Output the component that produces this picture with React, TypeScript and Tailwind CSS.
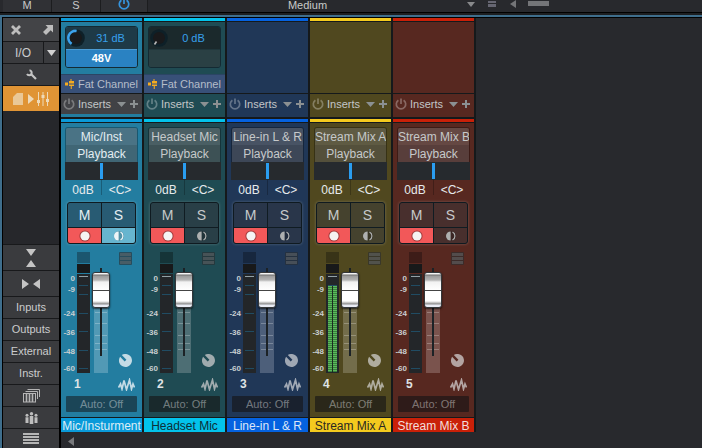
import React from "react";

type Channel = {
  id: number;
  label: string;
  name: string;
  body: string;
  strip: string;
  plateTop: string;
  plateBottom: string;
  button: string;
  auto: string;
  nameText: string;
  track: string;
  clip: string;
  soft: string;
  inserts: string;
  selected?: boolean;
  preamp?: { gain: string; phantom: boolean; arc: boolean };
  level?: boolean;
};

const channels: Channel[] = [
  {
    id: 1,
    label: "Mic/Inst",
    name: "Mic/Insturment",
    body: "bg-[#237da0]",
    strip: "bg-[#0a9ad9]",
    plateTop: "bg-[#4a7385]",
    plateBottom: "bg-[#406675]",
    button: "bg-[#285b73]",
    auto: "bg-[#1b4557]",
    nameText: "text-[#dceef7]",
    track: "#5299b5",
    clip: "#1b566f",
    soft: "text-[#c3dbe5]",
    inserts: "bg-[#414246]",
    selected: true,
    preamp: { gain: "31 dB", phantom: true, arc: true },
  },
  {
    id: 2,
    label: "Headset Mic",
    name: "Headset Mic",
    body: "bg-[#1f4b53]",
    strip: "bg-[#03c3eb]",
    plateTop: "bg-[#4a5f64]",
    plateBottom: "bg-[#3d5155]",
    button: "bg-[#293f47]",
    auto: "bg-[#19292c]",
    nameText: "text-[#0d2f38]",
    track: "#4d6e74",
    clip: "#153438",
    soft: "text-[#a0abae]",
    inserts: "bg-[#1f4b53]",
    preamp: { gain: "0 dB", phantom: false, arc: false },
  },
  {
    id: 3,
    label: "Line-in L & R",
    name: "Line-in L & R",
    body: "bg-[#203757]",
    strip: "bg-[#0562e0]",
    plateTop: "bg-[#485364]",
    plateBottom: "bg-[#3d4757]",
    button: "bg-[#29364a]",
    auto: "bg-[#19212e]",
    nameText: "text-[#dde7f7]",
    track: "#4d5f7a",
    clip: "#17273e",
    soft: "text-[#a0a8b4]",
    inserts: "bg-[#203757]",
  },
  {
    id: 4,
    label: "Stream Mix A",
    name: "Stream Mix A",
    body: "bg-[#50481f]",
    strip: "bg-[#f4ca1e]",
    plateTop: "bg-[#5f5b43]",
    plateBottom: "bg-[#54503b]",
    button: "bg-[#45422e]",
    auto: "bg-[#2a2719]",
    nameText: "text-[#2a2822]",
    track: "#736d4b",
    clip: "#383317",
    soft: "text-[#afac9f]",
    inserts: "bg-[#50481f]",
    level: true,
  },
  {
    id: 5,
    label: "Stream Mix B",
    name: "Stream Mix B",
    body: "bg-[#572820]",
    strip: "bg-[#c92008]",
    plateTop: "bg-[#654843]",
    plateBottom: "bg-[#583e3b]",
    button: "bg-[#482f2d]",
    auto: "bg-[#2e1b19]",
    nameText: "text-[#f3dedb]",
    track: "#7a534d",
    clip: "#3d1c18",
    soft: "text-[#b3a4a2]",
    inserts: "bg-[#572820]",
  },
];

const scale = [
  { text: "0", row: "h-[31px]" },
  { text: "-9", row: "h-[11px]" },
  { text: "-24", row: "h-[24px]" },
  { text: "-36", row: "h-[19px]" },
  { text: "-48", row: "h-[19px]" },
  { text: "-60", row: "h-[17px]" },
];

function Power({ className }: { className: string }) {
  return (
    <svg viewBox="0 0 12 12" className={className} fill="none" stroke="currentColor" strokeWidth="1.7">
      <path d="M6 0.5V6M3.4 2.2A4.7 4.7 0 1 0 8.6 2.2" />
    </svg>
  );
}

function Preamp({ channel }: { channel: Channel }) {
  const p = channel.preamp!;
  return (
    <div className="flex flex-1 flex-col">
      <div className="flex flex-1 flex-col px-1 pt-1">
        <div className="flex h-[42px] flex-col overflow-hidden rounded-[3px] border border-[#142a33]">
          <div className={`flex h-[22px] items-center ${p.phantom ? "bg-[#1e3a47]" : "bg-[#1b292c]"}`}>
            <svg viewBox="0 0 18 18" className="ml-px h-[18px] w-[18px]">
              <circle cx="9" cy="9" r="8.8" fill="#0e2028" />
              <circle cx="9" cy="9" r="6" fill="#19191b" />
              {p.arc ? (
                <path d="M4.6 14.8A7 7 0 0 1 9.6 2" fill="none" stroke="#3da2ec" strokeWidth="2.6" />
              ) : (
                <path d="M4.5 15.500L6.5 12.500" stroke="#b9b9b9" strokeWidth="1.6" />
              )}
            </svg>
            <span className="flex-1 pr-px text-center text-[11px] text-[#37a0ec]">{p.gain}</span>
          </div>
          <button
            aria-label="48V phantom power"
            className={`flex-1 border-t text-[11px] leading-[17px] font-bold text-white ${
              p.phantom ? "border-[#4c9bd2] bg-[#2a82c2]" : "border-[#20363b] bg-[#2a4044]"
            }`}
          >
            {p.phantom ? "48V" : ""}
          </button>
        </div>
      </div>
      <button className="flex h-[19px] items-center border-t border-[#2b4564] bg-[#385078] pt-px pl-1 text-[11px] text-[#b5bdc9]">
        <svg viewBox="0 0 9 10" className="mr-1 mb-[2px] h-[10px] w-[9px] shrink-0" fill="#f5ab20">
          <path d="M0 3.500h3v3H0zM4 2h1.500V0h1v2H9v2.600H4zM4 5.400h5V7H6.800v3H5.700V7H4z" />
        </svg>
        Fat Channel
      </button>
    </div>
  );
}

function Meter({ channel }: { channel: Channel }) {
  return (
    <svg viewBox="0 0 13 121" className="h-[121px] w-[13px] shrink-0" shapeRendering="crispEdges">
      <rect width="13" height="11" fill={channel.clip} />
      <rect y="12" width="13" height="9" fill="#18191a" />
      <rect y="22" width="13" height="99" fill="#232629" />
      {[33, 42, 61, 79, 98, 116].map((y) => (
        <rect key={y} x="2" y={y} width="9" height="1" fill="#204c63" />
      ))}
      <rect x="2" y="24" width="9" height="1" fill="#93a1a6" />
      {channel.level &&
        Array.from({ length: 43 }, (_, i) => 34 + i * 2).map((y) => (
          <g key={y}>
            <rect x="2" y={y} width="9" height="1" fill="#5cba5a" />
            <rect x="2" y={y + 1} width="9" height="1" fill="#38803f" />
          </g>
        ))}
      {channel.level && <rect x="6" y="34" width="1" height="87" fill="#1b2a20" />}
    </svg>
  );
}

function Fader({ channel }: { channel: Channel }) {
  return (
    <div className="ml-[2px] grid w-[18px] shrink-0 justify-items-center">
      <svg viewBox="0 0 14 121" className="col-start-1 row-start-1 h-[121px] w-[14px]" shapeRendering="crispEdges">
        <rect y="34" width="14" height="87" fill={channel.track} />
        {[60, 71, 83, 91, 97].map((y) => (
          <rect key={y} x="1" y={y} width="12" height="1" fill="#fff" opacity="0.25" />
        ))}
        <rect x="6" y="16" width="2" height="88" fill="#1c2226" />
      </svg>
      <input
        type="range"
        aria-label={`${channel.name} level`}
        min={0}
        max={52}
        defaultValue={48}
        className="col-start-1 row-start-1 mt-4 h-[88px] w-[18px] appearance-none bg-transparent [direction:rtl] [writing-mode:vertical-lr] [&::-webkit-slider-thumb]:h-[36px] [&::-webkit-slider-thumb]:w-[18px] [&::-webkit-slider-thumb]:appearance-none [&::-webkit-slider-thumb]:rounded-[3px] [&::-webkit-slider-thumb]:border [&::-webkit-slider-thumb]:border-[#34373a] [&::-webkit-slider-thumb]:bg-[linear-gradient(to_bottom,#f4f4f4_0px,#f4f4f4_1px,#6f6f6f_2px,#9c9c9c_3px,#b4b4b4_7px,#f2f2f2_9px,#ffffff_17px,#444444_17px,#444444_18px,#ffffff_18px,#ffffff_28px,#b5b5b5_30px,#8a8a8a_31px,#e9ecf5_32px,#e9ecf5_34px)] [&::-webkit-slider-thumb]:shadow-[0_1px_2px_#000000b0]"
      />
    </div>
  );
}

function Strip({ channel }: { channel: Channel }) {
  const c = channel;
  const text = c.selected ? "text-[#e3edf1]" : "text-[#c6c9ca]";
  const cell = `flex items-center justify-center ${c.button}`;
  return (
    <section aria-label={c.name} className="flex w-[81px] shrink-0 flex-col">
      <div className={`h-[3px] ${c.strip}`} />
      <div className={`mt-px flex h-[71px] flex-col ${c.body}`}>{c.preamp && <Preamp channel={c} />}</div>
      <div className={`mt-px h-[23px] ${c.body}`}>
        <div className={`flex h-5 items-center pl-[2px] text-[11px] text-[#c3c6c8] ${c.inserts}`}>
          <button aria-label="Bypass inserts" className="text-white/30">
            <Power className="h-3 w-3" />
          </button>
          <button className="ml-[3px] flex flex-1 items-center justify-between">
            Inserts
            <svg viewBox="0 0 9 5" className="mr-1 h-[5px] w-[9px]">
              <path d="M0 0h9L4.500 5z" fill="#8b9092" />
            </svg>
          </button>
          <button aria-label="Add insert" className="mr-1">
            <svg viewBox="0 0 8 8" className="h-2 w-2" fill="#8b9092">
              <path d="M3 0h2v3h3v2H5v3H3V5H0V3h3z" />
            </svg>
          </button>
        </div>
      </div>
      <div className={`mt-[2px] h-[3px] ${c.strip}`} />
      <div className={`mt-px flex flex-col px-1 pt-1 pb-[5px] ${c.body}`}>
        <div className={`flex flex-col overflow-hidden rounded-t-[3px] border border-b-0 border-black/30 text-[12px] ${text}`}>
          <button className={`h-[17px] leading-[18px] whitespace-nowrap ${c.plateTop}`}>{c.label}</button>
          <button className={`h-[17px] leading-[18px] ${c.plateBottom}`}>Playback</button>
        </div>
        <div className="flex h-[18px] justify-center bg-[#262a2e] py-px">
          <div className="w-[3px] bg-[#2a9df0]" />
        </div>
        <div className="flex h-5 text-[12px] text-[#e6eaec]">
          <div className="h-[15px] flex-1 border-r border-black/25 text-center leading-[21px]">0dB</div>
          <div className="h-[15px] flex-1 text-center leading-[21px]">&lt;C&gt;</div>
        </div>
        <div className="mx-[2px] mt-[2px] grid h-[42px] grid-cols-2 gap-px overflow-hidden rounded-[3px] border border-[#0f1a20] bg-[#101c22] shadow-[0_0_3px_#ffffff40]">
          <button className={`${cell} text-[14px] ${text}`}>M</button>
          <button className={`${cell} text-[14px] ${text}`}>S</button>
          <button aria-label="Record" className="flex items-center justify-center bg-[#f25859]">
            <svg viewBox="0 0 12 12" className="h-3 w-3">
              <circle cx="6" cy="6" r="5.600" fill="#a33b3c" />
              <circle cx="6" cy="6" r="4.600" fill="#f5f3f3" />
            </svg>
          </button>
          <button aria-label="Monitor" className={c.selected ? "flex items-center justify-center bg-[#67b5cf]" : cell}>
            <svg viewBox="0 0 12 12" className={`h-3 w-3 ${c.selected ? "text-[#eef5f8]" : "text-[#aeb0b0]"}`} fill="none">
              <circle cx="6" cy="6" r="5" fill="#00000030" />
              <path d="M5.600 1.400A4.600 4.600 0 0 0 5.600 10.600z" fill="currentColor" />
              <path d="M7.500 2A4.500 4.500 0 0 1 7.500 10" stroke="currentColor" strokeWidth="1.200" />
            </svg>
          </button>
        </div>
        <div className="-mx-1 mt-2 flex">
          <div className="flex w-[14px] shrink-0 flex-col items-end text-[8px] leading-[8px] font-bold text-[#c9cfd1]">
            {scale.map((s) => (
              <div key={s.text} className={`flex items-end ${s.row}`}>
                {s.text}
              </div>
            ))}
          </div>
          <div className="w-[2px]" />
          <Meter channel={c} />
          <Fader channel={c} />
          <div className={`ml-[9px] flex h-[115px] flex-col justify-between ${c.soft}`}>
            <button aria-label="Channel notes">
              <svg viewBox="0 0 13 13" className="h-[13px] w-[13px]">
                <rect width="13" height="13" rx="1" fill="#2a2d30" opacity="0.6" />
                <path d="M1 1h11v3H1zM1 5h11v3H1zM1 9h11v3H1z" fill="#6a6d70" opacity="0.5" />
              </svg>
            </button>
            <button aria-label="Input gain">
              <svg viewBox="0 0 13 13" className="h-[13px] w-[13px]" fill="currentColor">
                <path d="M2.800 1.100L7.400 5.700L5.700 7.400L1.100 2.800A6.500 6.500 0 1 0 2.800 1.100z" />
              </svg>
            </button>
          </div>
        </div>
        <div className="mt-[5px] flex h-[13px] items-center justify-between pr-[3px] pl-[9px]">
          <span className="text-[12px] leading-[15px] font-bold text-[#dfe3e5]">{c.id}</span>
          <svg viewBox="0 0 17 13" className={`h-[13px] w-[17px] ${c.soft}`} fill="none" stroke="currentColor" strokeWidth="1.700">
            <path d="M0.500 9.500L2.500 6L4 11L6 2.500L8.500 11.500L11.500 2L13.500 11L15 6L16.500 9.500" />
          </svg>
        </div>
        <button className={`mx-px mt-[5px] h-[16px] rounded-[1px] text-[11px] leading-[17px] text-white/40 ${c.auto}`}>Auto: Off</button>
      </div>
      <div className={`mt-px h-[14px] text-center text-[12px] leading-[16px] whitespace-nowrap ${c.strip} ${c.nameText}`}>
        {c.name}
      </div>
    </section>
  );
}

function Sidebar() {
  const item = "flex h-[21px] shrink-0 items-center justify-center bg-[#3a3b3e]";
  return (
    <nav className="flex w-[56px] shrink-0 flex-col gap-px bg-[#18191b] text-[11px] text-[#cbcccd]">
      <div className="flex h-[23px] shrink-0 items-center justify-between bg-[#434447] px-2 text-[#bdbdbd]">
        <button aria-label="Close">
          <svg viewBox="0 0 10 10" className="h-[10px] w-[10px]" stroke="currentColor" strokeWidth="2.800">
            <path d="M1 1l8 8M9 1l-8 8" />
          </svg>
        </button>
        <button aria-label="Detach">
          <svg viewBox="0 0 10 10" className="-mr-[2px] h-[10px] w-[10px]" fill="currentColor">
            <path d="M2.500 0H10V7.500L7.700 5.200L3 10L0 7L4.800 2.300z" />
          </svg>
        </button>
      </div>
      <div className="flex h-[21px] shrink-0 gap-px">
        <button className="w-10 bg-[#3a3b3e] text-[12px]">I/O</button>
        <button aria-label="I/O options" className="flex flex-1 items-center justify-center bg-[#3a3b3e]">
          <svg viewBox="0 0 9 6" className="h-[6px] w-[9px]" fill="#d2d2d2">
            <path d="M0 0h9L4.500 6z" />
          </svg>
        </button>
      </div>
      <button aria-label="Options" className={item}>
        <svg viewBox="0 0 11 11" className="h-[11px] w-[11px]" fill="none" stroke="#c4c4c4">
          <path d="M5 5L10 10" strokeWidth="2.200" />
          <path d="M3.500 1.300A2.500 2.500 0 1 1 1 5" strokeWidth="2" />
        </svg>
      </button>
      <button aria-label="Console" className="flex h-[25px] shrink-0 items-center justify-center bg-[#e09435]">
        <svg viewBox="0 0 36 14" className="h-[14px] w-9" fill="#eed9b8">
          <path d="M4 1h6v12H0V5z" opacity="0.75" />
          <path d="M15 2l6 5l-6 5z" />
          <path d="M25 0h1v14h-1zM24 8h3v3h-3zM29.500 0h1v14h-1zM28.500 3h3v3h-3zM34 0h1v14h-1zM33 7h3v3h-3z" />
        </svg>
      </button>
      <div className="-mt-px flex-1 bg-[#26272b]" />
      <button aria-label="Collapse vertically" className={`${item} min-h-[25px]`}>
        <svg viewBox="0 0 10 18" className="h-[18px] w-[10px]" fill="#c4c4c4">
          <path d="M0 0h10L5 7zM0 18h10L5 11z" />
        </svg>
      </button>
      <button aria-label="Collapse horizontally" className={`${item} min-h-[25px]`}>
        <svg viewBox="0 0 18 10" className="h-[10px] w-[18px]" fill="#c4c4c4">
          <path d="M0 0v10L7 5zM18 0v10L11 5z" />
        </svg>
      </button>
      <button className={item}>Inputs</button>
      <button className={item}>Outputs</button>
      <button className={item}>External</button>
      <button className={item}>Instr.</button>
      <button aria-label="Banks" className={item}>
        <svg viewBox="0 0 17 14" className="h-[14px] w-[17px]" fill="none" stroke="#b5b5b5">
          <path d="M2.500 2.500H14.500V10M4.500 0.500H16.500V8" />
          <rect x="0.500" y="4.500" width="12" height="8.500" />
          <path d="M3.500 5v8M6.500 5v8M9.500 5v8" strokeWidth="1.600" />
        </svg>
      </button>
      <button aria-label="Groups" className={item}>
        <svg viewBox="0 0 13 12" className="h-3 w-[13px]" fill="#bdbdbd">
          <circle cx="6.500" cy="1.700" r="1.700" />
          <circle cx="2" cy="3.200" r="1.500" />
          <circle cx="11" cy="3.200" r="1.500" />
          <path d="M4.700 4h3.600v8H4.700zM0.500 5.300h3V11h-3zM9.500 5.300h3V11h-3z" />
        </svg>
      </button>
      <button aria-label="Channel list" className="flex h-[19px] shrink-0 items-center justify-center bg-[#3a3b3e]">
        <svg viewBox="0 0 16 11" className="h-[11px] w-4" fill="#b5b5b5">
          <path d="M0 0h16v2H0zM0 3h16v2H0zM0 6h16v2H0zM0 9h16v2H0z" />
        </svg>
      </button>
    </nav>
  );
}

export default function App() {
  const cell = "h-full shrink-0 border-r border-[#1c1d1f] bg-[#303135]";
  return (
    <div className="flex h-screen min-h-[448px] flex-col overflow-hidden bg-black font-['Liberation_Sans',Arial,sans-serif]">
      <header className="flex h-3 shrink-0 items-start overflow-hidden bg-[#28292d] pl-[3px] text-[11px] leading-[11px] text-[#c9c9c9]">
        <button className={`${cell} flex w-[49px] justify-center`}>M</button>
        <button className={`${cell} flex w-[49px] justify-center`}>S</button>
        <button aria-label="Power" className={`${cell} flex w-[47px] justify-center text-[#3593dc]`}>
          <Power className="-mt-[2px] h-3 w-3 shrink-0" />
        </button>
        <select
          aria-label="Size"
          className="h-[10px] w-[319px] appearance-none bg-transparent leading-[10px] [text-align-last:center]"
        >
          <option>Medium</option>
        </select>
        <svg viewBox="0 0 84 10" className="h-[10px] w-[84px] shrink-0" fill="#88898b">
          <path d="M0 2h8L4 7z" />
          <path d="M21 1h8v2h-8zM21 4h8v3h-8z" fill="#666672" />
          <path d="M49 0v8L43 4z" fill="#747578" />
          <path d="M61 1h21v5H61z" fill="#747578" />
        </svg>
      </header>
      <div className="mt-px h-[2px] shrink-0 bg-[#1d1e20]" />
      <div className="flex min-h-0 flex-1 border-t-2 border-l-2 border-[#3f6e8c]">
        <div className="flex min-w-0 flex-1 gap-[2px] bg-black pt-px pl-px">
          <Sidebar />
          <main className="flex min-w-0 flex-1 flex-col bg-[#28292d]">
            <div className="flex">
              <div className="flex shrink-0 gap-[2px] bg-[#15191b] pr-[2px]">
                {channels.map((c) => (
                  <Strip key={c.id} channel={c} />
                ))}
              </div>
            </div>
            <button aria-label="Scroll left" className="mt-[5px] ml-[7px] w-2">
              <svg viewBox="0 0 6 9" className="h-[9px] w-[6px]" fill="#77787b">
                <path d="M6 0v9L0 4.500z" />
              </svg>
            </button>
          </main>
        </div>
      </div>
    </div>
  );
}
